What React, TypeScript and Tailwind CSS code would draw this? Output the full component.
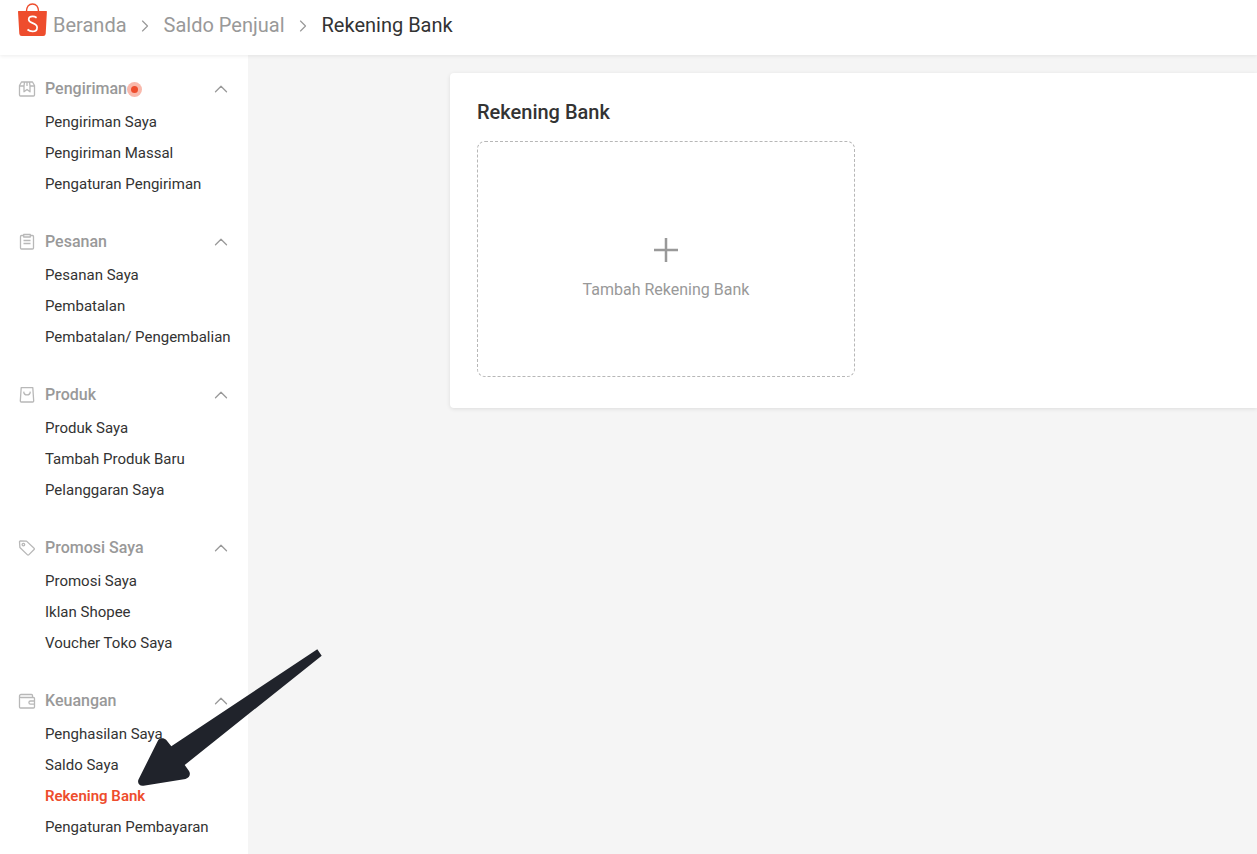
import { useState, type ReactNode } from "react";
import { ChevronRight, ChevronUp } from "lucide-react";
import clsx from "clsx";

// ── Types ────────────────────────────────────────────────────

interface MenuGroup {
  title: string;
  icon: ReactNode;
  hasUpdate?: boolean;
  items: string[];
}

// ── Menu icons ───────────────────────────────────────────────

function MenuIcon({ children }: { children: ReactNode }) {
  return (
    <svg
      viewBox="0 0 18 18"
      className="w-[18px] h-[18px] flex-shrink-0 text-[#b8b8b8]"
      fill="none"
      stroke="currentColor"
      strokeWidth="1.3"
      strokeLinejoin="round"
      aria-hidden="true"
    >
      {children}
    </svg>
  );
}

const MENU: MenuGroup[] = [
  {
    title: "Pengiriman",
    icon: (
      <MenuIcon>
        <path d="M3.500 2h11l2 3.500V15a1 1 0 0 1-1 1h-13a1 1 0 0 1-1-1V5.500z" />
        <path d="M1.500 6h4.500M12 6h4.500M6.500 2L6 6v5.800l3-2.300 3 2.300V6l-.5-4M9 2v4" />
      </MenuIcon>
    ),
    hasUpdate: true,
    items: ["Pengiriman Saya", "Pengiriman Massal", "Pengaturan Pengiriman"],
  },
  {
    title: "Pesanan",
    icon: (
      <MenuIcon>
        <path d="M5.500 2.500H3.500a1 1 0 0 0-1 1V15a1 1 0 0 0 1 1h11a1 1 0 0 0 1-1V3.500a1 1 0 0 0-1-1h-2" />
        <path d="M5.700 1.500h6.600v2.500H5.700zM5.500 7.500h7M5.500 10.500h7" />
      </MenuIcon>
    ),
    items: ["Pesanan Saya", "Pembatalan", "Pembatalan/ Pengembalian"],
  },
  {
    title: "Produk",
    icon: (
      <MenuIcon>
        <path d="M3.200 1.600h11.600l.9 13.400a1 1 0 0 1-1 1H3.300a1 1 0 0 1-1-1z" />
        <path d="M5.700 5.600c.3 4.400 6.300 4.400 6.600 0" />
      </MenuIcon>
    ),
    items: ["Produk Saya", "Tambah Produk Baru", "Pelanggaran Saya"],
  },
  {
    title: "Promosi Saya",
    icon: (
      <MenuIcon>
        <path d="M1.500 2.700l.4 5.800 7.600 7.400a.8.8 0 0 0 1.200 0l5.400-5.400a.8.8 0 0 0 0-1.200L8.500 2.100l-6.200-.2a.8.8 0 0 0-.8.8z" />
        <circle cx="5.400" cy="5.600" r="1.300" />
      </MenuIcon>
    ),
    items: ["Promosi Saya", "Iklan Shopee", "Voucher Toko Saya"],
  },
  {
    title: "Keuangan",
    icon: (
      <MenuIcon>
        <path d="M14.500 5V3.500a1 1 0 0 0-1-1H3A1.500 1.500 0 0 0 3 5.500h12.500a1 1 0 0 1 1 1v8.500a1 1 0 0 1-1 1h-13a1 1 0 0 1-1-1V4" />
        <path d="M16.500 9H12.500a1.600 1.600 0 0 0 0 3.200h4" />
      </MenuIcon>
    ),
    items: ["Penghasilan Saya", "Saldo Saya", "Rekening Bank", "Pengaturan Pembayaran"],
  },
];

// ── Logo ─────────────────────────────────────────────────────

function ShopeeLogo() {
  return (
    <svg viewBox="0 0 30 34" className="w-[30px] h-[34px] flex-shrink-0" role="img" aria-label="Shopee">
      <path d="M8.400 9C8.400 4 11 .9 14.500 .9S20.600 4 20.600 9" fill="none" stroke="#ee4d2d" strokeWidth="1.500" />
      <path d="M.5 8h27.900a.5.5 0 0 1 .5.500L27.700 30.700a2.500 2.500 0 0 1-2.500 2.300H3.800A2.500 2.500 0 0 1 1.300 30.700L0 8.500A.5.500 0 0 1 .5 8z" fill="#ee4d2d" />
      <path
        d="M18.600 14.700c-1.300-.9-2.600-1.300-4-1.300-2.300 0-3.900 1.200-3.900 3.100 0 4.400 8.400 2.900 8.400 7.900 0 2.400-1.900 4-4.600 4-1.900 0-3.600-.7-5-1.900"
        fill="none"
        stroke="#fff"
        strokeWidth="1.700"
      />
    </svg>
  );
}

// ── Sidebar ──────────────────────────────────────────────────

function SidebarGroup({
  group,
  active,
  onSelect,
}: {
  group: MenuGroup;
  active: string;
  onSelect: (id: string) => void;
}) {
  const [open, setOpen] = useState(true);

  return (
    <section>
      <button
        type="button"
        aria-expanded={open}
        onClick={() => setOpen(!open)}
        className="flex items-center w-full h-[34px] pl-[18px] pr-5 text-base font-medium text-[#999]"
      >
        {group.icon}
        <span className="ml-[9px]">{group.title}</span>
        {group.hasUpdate && (
          <span className="flex items-center justify-center w-[15px] h-[15px] rounded-full bg-[#f9b9ac]">
            <span className="w-[7px] h-[7px] rounded-full bg-[#ee4d2d]" />
          </span>
        )}
        <ChevronUp
          size={22}
          strokeWidth={1.4}
          className={clsx("ml-auto -mr-1", !open && "rotate-180")}
        />
      </button>

      {open && (
        <ul className="pl-[45px]">
          {group.items.map((item) => {
            const id = `${group.title}/${item}`;
            return (
              <li key={item} className="flex items-center h-[31px]">
                <a
                  href="#"
                  onClick={() => onSelect(id)}
                  className={clsx(
                    "text-[15px] leading-5 whitespace-nowrap",
                    active === id ? "font-semibold text-[#ee4d2d]" : "text-[#333]"
                  )}
                >
                  {item}
                </a>
              </li>
            );
          })}
        </ul>
      )}
    </section>
  );
}

// ── Pointer arrow ────────────────────────────────────────────

function PointerArrow() {
  return (
    <svg
      viewBox="0 0 190 142"
      className="absolute left-[134px] top-[646px] w-[190px] h-[142px] pointer-events-none"
      aria-hidden="true"
    >
      <path
        d="M183.300 3.300L37.300 100.300 32.300 94C30 91.500 25.500 91.500 24 94.500L4.500 133.500C3 137 5.500 140.300 9.500 139.700L51.500 133C55.500 132 57 128 55 125L50.700 119 187.700 9.700z"
        fill="#20232b"
      />
    </svg>
  );
}

// ── Page ─────────────────────────────────────────────────────

export default function App() {
  const [active, setActive] = useState("Keuangan/Rekening Bank");

  return (
    <div className="relative flex flex-col min-h-screen overflow-hidden bg-[#f5f5f5] font-[Roboto,sans-serif] text-[#333]">
      <header className="relative flex h-[55px] bg-white shadow-[0_1px_4px_rgba(0,0,0,0.08)]">
        <nav aria-label="Breadcrumb" className="flex pl-[18px] text-xl leading-[50px] text-[#999]">
          <a href="#" className="flex">
            <span className="pt-[3px]">
              <ShopeeLogo />
            </span>
            <span className="ml-[5px]">Beranda</span>
          </a>
          <ChevronRight size={20} strokeWidth={1.4} className="ml-2 mr-[9px] mt-4" />
          <a href="#">Saldo Penjual</a>
          <ChevronRight size={20} strokeWidth={1.4} className="ml-2 mr-[9px] mt-4" />
          <span className="text-[#333]">Rekening Bank</span>
        </nav>
      </header>

      <div className="flex flex-1">
        <aside className="flex flex-col gap-[26px] w-[248px] flex-shrink-0 pt-[17px] bg-white">
          {MENU.map((group) => (
            <SidebarGroup key={group.title} group={group} active={active} onSelect={setActive} />
          ))}
        </aside>

        <main className="flex-1 min-w-0 pl-[202px] pt-[18px]">
          <section className="px-[27px] pt-6 pb-[31px] rounded-l bg-white shadow-[0_1px_4px_rgba(0,0,0,0.1)]">
            <h1 className="text-xl leading-[30px] font-medium">Rekening Bank</h1>
            <button
              type="button"
              className="flex flex-col items-center justify-center gap-4 w-[378px] h-[236px] mt-[14px] pt-[22px] border border-dashed border-[#b7b7b7] rounded-lg text-base text-[#999]"
            >
              <svg viewBox="0 0 24 24" className="w-6 h-6" stroke="currentColor" strokeWidth="2.500" aria-hidden="true">
                <path d="M12 0v24M0 12h24" />
              </svg>
              Tambah Rekening Bank
            </button>
          </section>
        </main>
      </div>

      <PointerArrow />
    </div>
  );
}
